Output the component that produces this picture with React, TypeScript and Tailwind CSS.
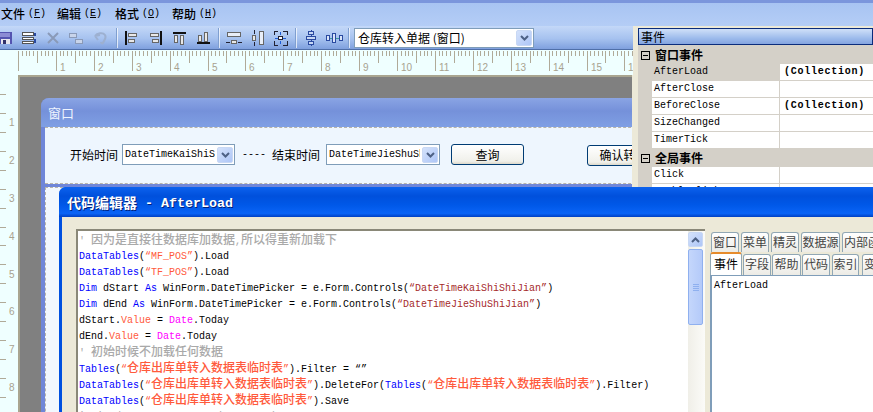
import React from "react";

function T({ s, cjk = "text-[12px]" }: { s: string; cjk?: string }) {
  const parts = s.split(/([\u4e00-\u9fff]+)/);
  return (
    <>
      {parts.map((p, i) =>
        /[\u4e00-\u9fff]/.test(p) ? (
          <span key={i} className={`${cjk} font-['Noto_Sans_CJK_SC',sans-serif]`}>
            {p}
          </span>
        ) : (
          <span key={i}>{p}</span>
        )
      )}
    </>
  );
}

function MenuItem({ label, k, w }: { label: string; k: string; w: string }) {
  return (
    <div className={`flex items-center text-[12px] text-black ${w}`}>
      <span className="font-['Noto_Sans_CJK_SC',sans-serif] font-medium">{label}</span>
      <span className="ml-[3px] font-['Liberation_Mono',monospace] text-[10px]">
        (<span className="underline">{k}</span>)
      </span>
    </div>
  );
}

function Ico({ children, w = 16, cls = "" }: { children: React.ReactNode; w?: number; cls?: string }) {
  return (
    <svg width={w} height={16} viewBox={`0 0 ${w} 16`} className={`shrink-0 ${cls}`} shapeRendering="crispEdges">
      {children}
    </svg>
  );
}

function Sep({ cls }: { cls: string }) {
  return <div className={`h-[20px] w-[2px] shrink-0 border-l border-[#7f9fd0] bg-white/70 ${cls}`} />;
}

function Toolbar() {
  return (
    <div className="flex h-[24px] items-center bg-[linear-gradient(180deg,#c4d8f8_0%,#a6c2ef_55%,#7fa0de_100%)] border-b border-[#4f6fa8]">
      <Ico w={13}>
        <rect x="0" y="2" width="12" height="12" fill="#5454b0" />
        <rect x="0" y="3" width="10" height="4" fill="#8c8cd4" />
        <rect x="1" y="9" width="9" height="5" fill="#e6e6ee" />
        <rect x="3" y="10" width="3" height="4" fill="#30306a" />
      </Ico>
      <Ico w={16} cls="ml-[8px]">
        <rect x="1" y="2" width="11" height="3" fill="#fff" stroke="#555" />
        <rect x="1" y="7" width="11" height="2" fill="#fff" stroke="#555" />
        <rect x="1" y="11" width="11" height="2" fill="#fff" stroke="#555" />
        <path d="M14 3v3M14 9v4" stroke="#2a4aa0" strokeWidth="2" />
      </Ico>
      <svg width="14" height="14" viewBox="0 0 14 14" className="ml-[9px] shrink-0">
        <path d="M2 2l10 10M12 2L2 12" stroke="#8a9ab8" strokeWidth="2" />
      </svg>
      <Ico w={14} cls="ml-[9px]">
        <rect x="0.5" y="3.5" width="7" height="4" fill="#c8d4ea" stroke="#8a9ab8" />
        <rect x="6.5" y="9.5" width="7" height="4" fill="#c8d4ea" stroke="#8a9ab8" />
      </Ico>
      <svg width="14" height="14" viewBox="0 0 14 14" className="ml-[11px] shrink-0">
        <path d="M1 5c2-3 8-4 10-1 2 3-1 5-2 8-1 1-2 0-2-1M1 5l5-1M1 5l3 4" fill="none" stroke="#9db0d0" strokeWidth="2" />
      </svg>
      <Sep cls="ml-[8px]" />
      <Ico w={13} cls="ml-[7px]">
        <rect x="0" y="1" width="2" height="14" fill="#111" />
        <rect x="3.5" y="3.5" width="8" height="3" fill="#e8e8e8" stroke="#666" />
        <rect x="3.5" y="9.5" width="6" height="3" fill="#e8e8e8" stroke="#666" />
      </Ico>
      <Ico w={12} cls="ml-[12px]">
        <rect x="10" y="1" width="2" height="14" fill="#111" />
        <rect x="0.5" y="3.5" width="8" height="3" fill="#e8e8e8" stroke="#666" />
        <rect x="2.5" y="9.5" width="6" height="3" fill="#e8e8e8" stroke="#666" />
      </Ico>
      <Ico w={13} cls="ml-[11px]">
        <rect x="0" y="2" width="13" height="2" fill="#111" />
        <rect x="1.5" y="5.5" width="3" height="7" fill="#e8e8e8" stroke="#666" />
        <rect x="7.5" y="5.5" width="3" height="9" fill="#e8e8e8" stroke="#666" />
      </Ico>
      <Ico w={13} cls="ml-[11px]">
        <rect x="0" y="12" width="13" height="2" fill="#111" />
        <rect x="1.5" y="5.5" width="3" height="6" fill="#e8e8e8" stroke="#666" />
        <rect x="7.5" y="2.5" width="3" height="9" fill="#e8e8e8" stroke="#666" />
      </Ico>
      <Sep cls="ml-[8px]" />
      <Ico w={16} cls="ml-[6px]">
        <rect x="1.5" y="2.5" width="13" height="4" fill="#e8eef8" stroke="#666" />
        <rect x="5.5" y="10.5" width="5" height="3" fill="#e8e8e8" stroke="#666" />
        <path d="M0 12h4M12 12h4" stroke="#223" />
      </Ico>
      <Ico w={15} cls="ml-[8px]">
        <rect x="9.5" y="1.5" width="4" height="13" fill="#e8eef8" stroke="#666" />
        <rect x="2.5" y="5.5" width="3" height="5" fill="#e8e8e8" stroke="#666" />
        <path d="M4 0v4M4 12v4" stroke="#223" />
      </Ico>
      <Ico w={15} cls="ml-[8px]">
        <path d="M1 5V1h4M10 1h4v4M14 11v4h-4M5 15H1v-4" fill="none" stroke="#223" />
        <rect x="5.5" y="6.5" width="4" height="3" fill="#fff" stroke="#223" />
        <path d="M7.5 2v3M7.5 11v3M2 8h3M10 8h3" stroke="#1c5cd8" />
      </Ico>
      <Sep cls="ml-[7px]" />
      <Ico w={11} cls="ml-[9px]">
        <path d="M5 0v16" stroke="#2a4aa0" />
        <rect x="2.5" y="1.5" width="5" height="3" fill="#c8d8f4" stroke="#2a4aa0" />
        <rect x="0.5" y="6.5" width="9" height="3" fill="#c8d8f4" stroke="#2a4aa0" />
        <rect x="2.5" y="11.5" width="5" height="3" fill="#c8d8f4" stroke="#2a4aa0" />
      </Ico>
      <Ico w={17} cls="ml-[9px]">
        <path d="M0 8h17" stroke="#3f9a9a" />
        <rect x="0.5" y="5.5" width="3" height="5" fill="#d8e4f8" stroke="#2a4aa0" />
        <rect x="6.5" y="3.5" width="3" height="9" fill="#d8e4f8" stroke="#2a4aa0" />
        <rect x="13.5" y="5.5" width="3" height="5" fill="#d8e4f8" stroke="#2a4aa0" />
      </Ico>
      <Sep cls="ml-[5px]" />
      <div className="ml-[4px] flex h-[20px] w-[180px] shrink-0 items-center justify-between border border-[#7f9db9] bg-white pl-[3px] pr-[1px]">
        <span className="font-['Noto_Sans_CJK_SC',sans-serif] text-[12px] text-black">仓库转入单据 (窗口)</span>
        <Arrow />
      </div>
    </div>
  );
}

function Arrow() {
  return (
    <div className="flex h-[16px] w-[16px] shrink-0 items-center justify-center rounded-[2px] bg-[linear-gradient(135deg,#d4e2fb,#aec6f7)] border border-[#c8d8f4]">
      <svg width="9" height="6" viewBox="0 0 9 6">
        <path d="M1 1l3.5 3.5L8 1" fill="none" stroke="#4d6185" strokeWidth="2" />
      </svg>
    </div>
  );
}

function TopRuler() {
  const ticks: React.ReactNode[] = [];
  for (let i = 0; i < 170; i++) {
    const x = Math.round(18 + i * 3.79) + 0.5;
    const h = i % 10 === 0 ? 20 : i % 5 === 0 ? 12 : 5;
    ticks.push(<line key={i} x1={x} x2={x} y1={1} y2={1 + h} stroke="#b0aa98" />);
  }
  const labels: React.ReactNode[] = [];
  for (let n = 1; n <= 16; n++) {
    labels.push(
      <text key={n} x={Math.round(18 + n * 37.9) + 4} y={21} fontSize="10" fill="#a8a290" fontFamily="'Liberation Sans', sans-serif">
        {n}
      </text>
    );
  }
  return (
    <svg width="633" height="25" className="block bg-[#efffff]" viewBox="0 0 633 25">
      {ticks}
      {labels}
    </svg>
  );
}

function LeftRuler() {
  const ticks: React.ReactNode[] = [];
  for (let i = 0; i < 18; i++) {
    const y = 19 + i * 18.93;
    ticks.push(<line key={i} x1={0} x2={6} y1={Math.round(y) + 0.5} y2={Math.round(y) + 0.5} stroke="#b0aa98" />);
  }
  const labels: React.ReactNode[] = [];
  for (let n = 1; n <= 8; n++) {
    labels.push(
      <text key={n} x={9} y={Math.round(n * 37.9) + 13} fontSize="10" fill="#a8a290" fontFamily="'Liberation Sans', sans-serif">
        {n}
      </text>
    );
  }
  return (
    <svg width="18" height="337" viewBox="0 0 18 337" className="block shrink-0 bg-[#efffff]">
      {ticks}
      {labels}
    </svg>
  );
}

function Combo({ text, w }: { text: string; w: string }) {
  return (
    <div className={`flex h-[21px] shrink-0 items-center border border-[#7f9db9] bg-white pl-[2px] pr-[1px] ${w}`}>
      <span className="mr-[2px] flex-1 overflow-hidden whitespace-nowrap font-['Liberation_Mono',monospace] text-[10px] font-medium text-black">{text}</span>
      <Arrow />
    </div>
  );
}

function FormButton({ text, w, cls = "" }: { text: string; w: string; cls?: string }) {
  return (
    <div className={`flex h-[21px] shrink-0 items-center justify-center whitespace-nowrap rounded-[3px] border border-[#003c74] bg-[linear-gradient(180deg,#fff,#f0f0ea_85%,#dcd8ca)] font-['Noto_Sans_CJK_SC',sans-serif] text-[12px] text-black ${w} ${cls}`}>
      {text}
    </div>
  );
}

function Designer() {
  return (
    <div className="flex h-[337px] overflow-hidden">
      <LeftRuler />
      <div className="w-[614px] overflow-hidden border-t-2 border-l-2 border-[#a9a590] bg-[#808080] pl-[21px] pt-[21px]">
        <div className="h-[400px] w-[620px] rounded-tl-[8px] bg-[#6f86d8] pb-[4px] pl-[4px]">
          <div className="-ml-[4px] flex h-[29px] items-center rounded-tl-[8px] bg-[linear-gradient(180deg,#8aa4e4_0%,#7591da_45%,#7f9fe4_100%)] pl-[7px] font-['Noto_Sans_CJK_SC',sans-serif] text-[13px] text-[#eef4ff]">
            窗口
          </div>
          <div className="flex h-[57px] items-center border-y border-dashed border-[#b8b4a8] bg-[#eef6fe] pb-[2px] pl-[25px]">
            <span className="whitespace-nowrap font-['Noto_Sans_CJK_SC',sans-serif] text-[12px] text-black">开始时间</span>
            <Combo text="DateTimeKaiShiShiJian" w="ml-[4px] w-[113px]" />
            <span className="ml-[7px] w-[30px] shrink-0 font-['Liberation_Mono',monospace] text-[10px] text-black">----</span>
            <span className="whitespace-nowrap font-['Noto_Sans_CJK_SC',sans-serif] text-[12px] text-black">结束时间</span>
            <Combo text="DateTimeJieShuShiJian" w="ml-[6px] w-[114px]" />
            <FormButton text="查询" w="ml-[11px] w-[73px]" />
            <FormButton text="确认转入" w="ml-[63px] w-[73px] mt-[1px]" />
          </div>
          <div className="mt-[3px] h-[300px] border-l border-t border-dashed border-[#b8b4a8] bg-[#f2f8fe]" />
        </div>
      </div>
    </div>
  );
}

const B = ({ c }: { c: string }) => <span className="text-[#0000ff]">{c}</span>;
const R = ({ c }: { c: string }) => <span className="text-[#ff5a3c]"><T s={c} /></span>;
const D = ({ c }: { c: string }) => <span className="text-[#a52a2a]">{c}</span>;
const M = ({ c }: { c: string }) => <span className="text-[#ff00ff]">{c}</span>;
const G = ({ c }: { c: string }) => <span className="text-[#a9a9a9]"><T s={c} /></span>;

function CodeLines() {
  const lines: { n: React.ReactNode; latin?: boolean }[] = [
    { n: <G c="' 因为是直接往数据库加数据,所以得重新加载下" /> },
    { n: <><B c="DataTables" />(<R c="“MF_POS”" />).Load</>, latin: true },
    { n: <><B c="DataTables" />(<R c="“TF_POS”" />).Load</>, latin: true },
    { n: <><B c="Dim" /> dStart <B c="As" /> WinForm.DateTimePicker = e.Form.Controls(<D c="“DateTimeKaiShiShiJian”" />)</>, latin: true },
    { n: <><B c="Dim" /> dEnd <B c="As" /> WinForm.DateTimePicker = e.Form.Controls(<D c="“DateTimeJieShuShiJian”" />)</>, latin: true },
    { n: <>dStart.<R c="Value" /> = <M c="Date" />.Today</>, latin: true },
    { n: <>dEnd.<R c="Value" /> = <M c="Date" />.Today</>, latin: true },
    { n: <G c="' 初始时候不加载任何数据" /> },
    { n: <><B c="Tables" />(<R c="“仓库出库单转入数据表临时表”" />).Filter = “”</> },
    { n: <><B c="DataTables" />(<R c="“仓库出库单转入数据表临时表”" />).DeleteFor(<B c="Tables" />(<R c="“仓库出库单转入数据表临时表”" />).Filter)</> },
    { n: <><B c="DataTables" />(<R c="“仓库出库单转入数据表临时表”" />).Save</> },
    { n: <G c="' Dim dStartAs Integer (0,0,Date)" />, latin: true },
  ];
  return (
    <div className="flex-1 overflow-hidden pl-[1px] font-['Liberation_Mono',monospace] text-[10px] font-medium text-black">
      {lines.map((l, i) => (
        <div key={i} className={`h-[16px] whitespace-pre leading-[16px] ${l.latin ? "pt-[2px]" : ""}`}>
          {l.n}
        </div>
      ))}
    </div>
  );
}

function Scrollbar() {
  return (
    <div className="flex h-[200px] w-[17px] shrink-0 flex-col bg-[linear-gradient(90deg,#f0efe8,#fbfbf8)]">
      <div className="mt-[1px] flex h-[15px] w-[15px] items-center justify-center rounded-[2px] border border-[#c8d8f4] bg-[linear-gradient(135deg,#d4e2fb,#aec6f7)]">
        <svg width="9" height="6" viewBox="0 0 9 6">
          <path d="M1 5l3.5-3.5L8 5" fill="none" stroke="#4d6185" strokeWidth="2" />
        </svg>
      </div>
      <div className="mt-[2px] flex h-[76px] w-[15px] items-center justify-center rounded-[2px] border border-[#8fb0ef] bg-[linear-gradient(90deg,#c4d6fb,#b4caf9)]">
        <div className="flex w-[6px] flex-col gap-[1px]">
          <div className="h-[1px] bg-[#8fb0ef]" />
          <div className="h-[1px] bg-[#8fb0ef]" />
          <div className="h-[1px] bg-[#8fb0ef]" />
          <div className="h-[1px] bg-[#8fb0ef]" />
        </div>
      </div>
    </div>
  );
}

function Tab({ text, w, active = false, clip = false, h = "h-[21px] mt-[2px]" }: { text: string; w: string; active?: boolean; clip?: boolean; h?: string }) {
  return (
    <div
      className={`flex shrink-0 items-center overflow-hidden whitespace-nowrap rounded-t-[3px] border border-b-0 pb-[2px] font-['Noto_Sans_CJK_SC',sans-serif] text-[12px] ${clip ? "justify-start pl-[1px]" : "justify-center"} ${w} ${
        active
          ? "h-[23px] border-t-2 border-[#e68b2c] border-x-[#91a7b4] bg-white text-black"
          : `${h} border-[#91a7b4] bg-[linear-gradient(180deg,#fff,#ecebe5)] text-[#444]`
      }`}
    >
      {text}
    </div>
  );
}

function TabsPane() {
  const h1 = "h-[20px]";
  return (
    <div className="flex w-[200px] flex-col">
      <div className="flex h-[20px] gap-[2px] pl-[1px]">
        <Tab text="窗口" w="w-[28px]" h={h1} />
        <Tab text="菜单" w="w-[28px]" h={h1} />
        <Tab text="精灵" w="w-[28px]" h={h1} />
        <Tab text="数据源" w="w-[39px]" h={h1} />
        <Tab text="内部函数" w="w-[48px]" h={h1} clip />
      </div>
      <div className="flex h-[23px]">
        <Tab text="事件" w="w-[32px]" active />
        <Tab text="字段" w="ml-[1px] w-[28px]" />
        <Tab text="帮助" w="ml-[1px] w-[29px]" />
        <Tab text="代码" w="ml-[1px] w-[28px]" />
        <Tab text="索引" w="ml-[2px] w-[27px]" />
        <Tab text="变量" w="ml-[3px] w-[28px]" clip />
      </div>
      <div className="h-[200px] border-l-2 border-t border-[#7f9db9] bg-white pl-[2px] pt-[2px] font-['Liberation_Mono',monospace] text-[10px] font-medium leading-[16px] text-black">
        AfterLoad
      </div>
    </div>
  );
}

function CodeEditor() {
  return (
    <div className="absolute left-[59px] top-[187px] flex h-[260px] w-[830px] flex-col overflow-hidden rounded-tl-[7px] bg-[#0050e0]">
      <div className="flex h-[30px] shrink-0 items-center bg-[linear-gradient(180deg,#0c62ee_0%,#0050dc_30%,#0058e8_60%,#0a64f6_88%,#0040c4_100%)] pl-[8px] pt-[2px] font-bold text-white [text-shadow:1px_1px_0_#00207a]">
        <span className="pb-[1px] font-['Noto_Sans_CJK_SC',sans-serif] text-[14px]">代码编辑器</span>
        <span className="whitespace-pre pt-[1px] font-['Liberation_Mono',monospace] text-[13.33px]"> - AfterLoad</span>
      </div>
      <div className="ml-[3px] flex flex-1 gap-[5px] bg-[#ece9d8] pl-[14px] pt-[12px]">
        <div className="flex h-[200px] w-[629px] shrink-0 border-l-2 border-t-2 border-[#8a8878] bg-white">
          <CodeLines />
          <Scrollbar />
        </div>
        <div className="pt-[3px]">
          <TabsPane />
        </div>
      </div>
    </div>
  );
}

function PropRow({ name, value, selected = false }: { name: string; value?: string; selected?: boolean }) {
  return (
    <div className="flex h-[17px]">
      <div className={`flex w-[127px] items-center border-b border-[#d4d0c8] pb-[1px] pl-[2px] ${selected ? "" : "bg-white"}`}>{name}</div>
      <div className="flex-1 border-b border-l border-[#d4d0c8] bg-white pl-[4px] font-bold leading-[15px] tracking-[0.75px]">{value}</div>
    </div>
  );
}

function Category({ text }: { text: string }) {
  return (
    <div className="-ml-[14px] flex h-[18px] items-center pl-[3px]">
      <div className="flex h-[9px] w-[9px] items-center justify-center border border-black bg-[#d4d0c8]">
        <div className="h-[1px] w-[5px] bg-black" />
      </div>
      <span className="ml-[5px] font-['Noto_Sans_CJK_SC',sans-serif] text-[12px] font-bold text-black">{text}</span>
    </div>
  );
}

function PropertyPanel() {
  return (
    <div className="flex w-[240px] shrink-0 flex-col bg-[#ece9d8] pl-[5px] pt-[2px]">
      <div className="flex h-[17px] shrink-0 items-center border border-[#0a2c7c] bg-[linear-gradient(180deg,#d0e0f8,#9ebcec_60%,#84a4e0)] pl-[2px] font-['Noto_Sans_CJK_SC',sans-serif] text-[12px] text-black">
        事件
      </div>
      <div className="flex-1 bg-[#d4d0c8] pl-[14px] pt-[1px] font-['Liberation_Mono',monospace] text-[10px] font-medium text-black">
        <Category text="窗口事件" />
        <PropRow name="AfterLoad" value="(Collection)" selected />
        <PropRow name="AfterClose" />
        <PropRow name="BeforeClose" value="(Collection)" />
        <PropRow name="SizeChanged" />
        <PropRow name="TimerTick" />
        <Category text="全局事件" />
        <PropRow name="Click" />
        <PropRow name="DoubleClick" />
      </div>
    </div>
  );
}

export default function App() {
  return (
    <div className="relative h-[412px] w-[873px] overflow-hidden bg-[#ece9d8]">
      <div className="flex h-[26px] items-center border-t-[3px] border-[#7b96dc] bg-[linear-gradient(180deg,#a8c4f2,#b4cdf6)] pb-[2px] pl-[1px]">
        <MenuItem label="文件" k="F" w="w-[56px]" />
        <MenuItem label="编辑" k="E" w="w-[58px]" />
        <MenuItem label="格式" k="O" w="w-[57px]" />
        <MenuItem label="帮助" k="H" w="w-[60px]" />
      </div>
      <div className="flex h-[386px]">
        <div className="w-[633px] shrink-0">
          <Toolbar />
          <TopRuler />
          <Designer />
        </div>
        <PropertyPanel />
      </div>
      <CodeEditor />
    </div>
  );
}
